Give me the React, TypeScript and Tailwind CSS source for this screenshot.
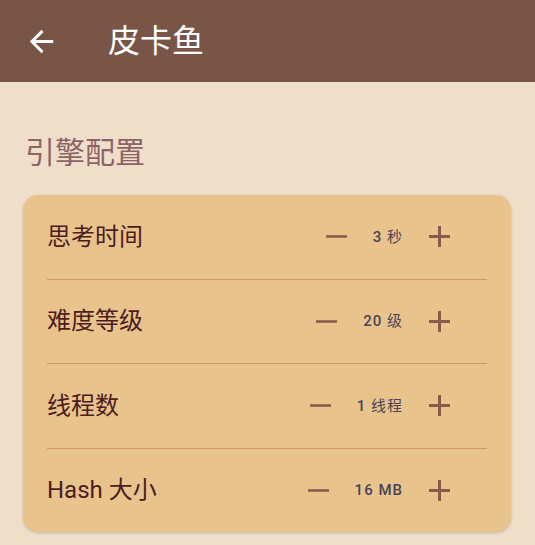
import React from 'react';

const font = { fontFamily: 'Roboto, "Noto Sans CJK SC", sans-serif' };

interface Setting {
  label: string;
  num: string;
  unit: string;
  cjk: boolean;
}

const settings: Setting[] = [
  { label: '思考时间', num: '3', unit: '秒', cjk: true },
  { label: '难度等级', num: '20', unit: '级', cjk: true },
  { label: '线程数', num: '1', unit: '线程', cjk: true },
  { label: 'Hash 大小', num: '16', unit: 'MB', cjk: false },
];

const MinusIcon = () => (
  <svg width="21" height="21" viewBox="5 5 14 14" className="fill-[#8a5a4a]">
    <path d="M19 12.85H5v-1.7h14v1.7z" />
  </svg>
);

const PlusIcon = () => (
  <svg width="21" height="21" viewBox="5 5 14 14" className="fill-[#8a5a4a]">
    <path d="M19 13h-6v6h-2v-6H5v-2h6V5h2v6h6v2z" />
  </svg>
);

const SettingRow = ({ setting }: { setting: Setting }) => (
  <div className="h-[83.5px] flex items-center pl-6 pr-[61px]">
    <span className="flex-1 text-[24px] leading-[32px] text-[#4b1d21]">{setting.label}</span>
    <div className="flex items-center gap-[26px]">
      <MinusIcon />
      <span className="text-[15px] tracking-[1px] text-[#4a4458]">
        <span className="font-medium">{setting.num}</span>{' '}
        <span className={setting.cjk ? 'font-normal' : 'font-medium'}>{setting.unit}</span>
      </span>
      <PlusIcon />
    </div>
  </div>
);

export default function App() {
  return (
    <div className="w-[535px] h-[545px] bg-[#efdfca] overflow-hidden" style={font}>
      {/* App bar */}
      <header className="h-[82px] bg-[#795548] flex items-center">
        <svg width="35" height="35" viewBox="0 0 24 24" className="ml-[24px] fill-white">
          <path d="M20 11H7.83l5.59-5.59L12 4l-8 8 8 8 1.41-1.41L7.83 13H20v-2z" />
        </svg>
        <h1 className="ml-[49px] text-[32px] leading-[40px] text-white">皮卡鱼</h1>
      </header>

      {/* Section title */}
      <h2 className="mt-[53px] ml-[25px] text-[30px] leading-[36px] text-[#8b6468]">引擎配置</h2>

      {/* Settings card */}
      <div className="mt-[24px] ml-[23px] mr-[24px] rounded-[15px] bg-[#e9c38c] shadow-[0_1px_3px_rgba(0,0,0,0.18)]">
        {settings.map((s, i) => (
          <div key={s.label}>
            {i > 0 && <div className="mx-6 h-px bg-[#d09868]" />}
            <SettingRow setting={s} />
          </div>
        ))}
      </div>
    </div>
  );
}
